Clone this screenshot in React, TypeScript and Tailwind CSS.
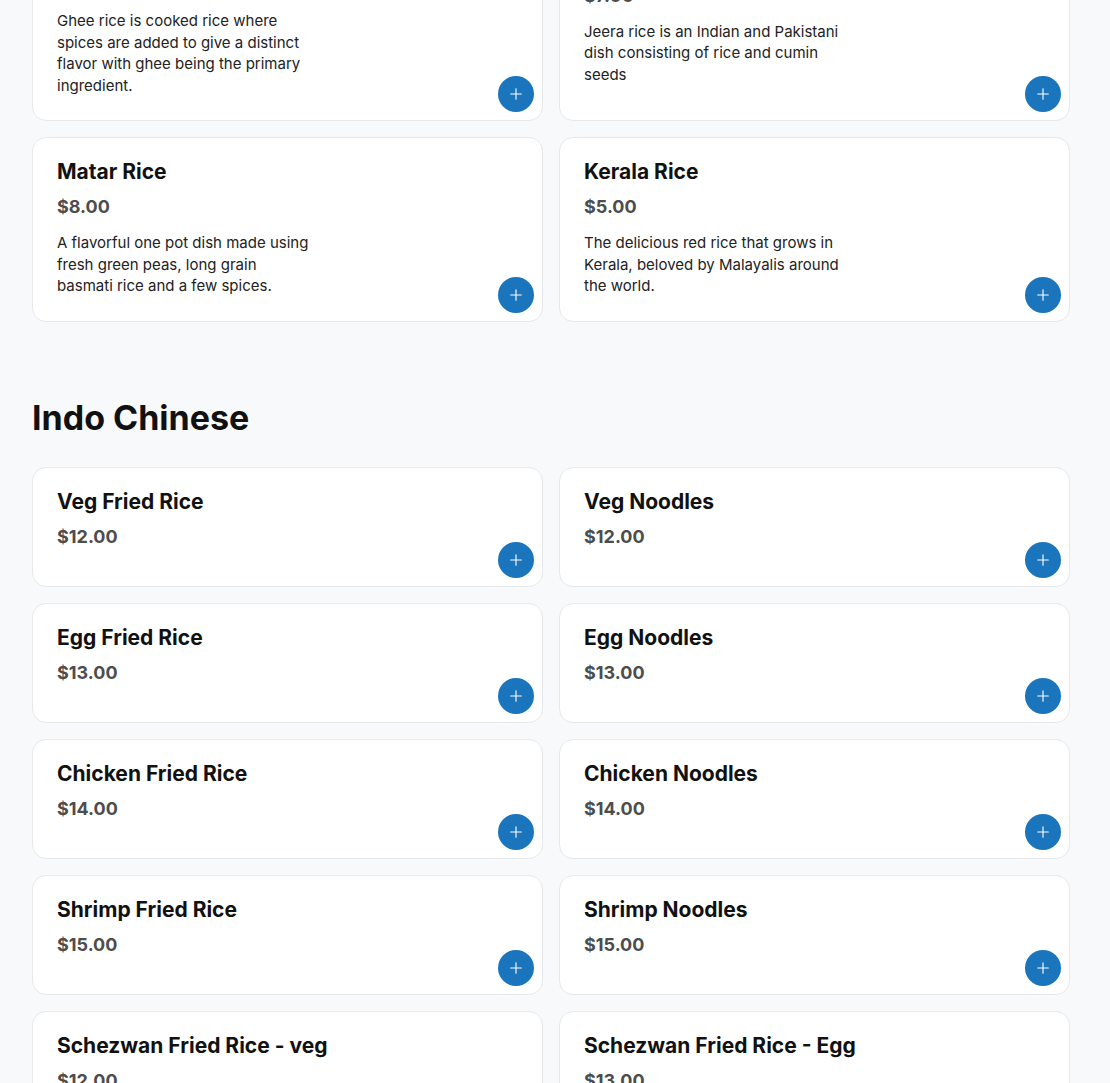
import { Plus } from 'lucide-react';

type Dish = { name: string; price: string; desc?: string };

const riceTop: Dish[] = [
  { name: 'Ghee Rice', price: '$7.00', desc: 'Ghee rice is cooked rice where spices are added to give a distinct flavor with ghee being the primary ingredient.' },
  { name: 'Jeera Rice', price: '$7.00', desc: 'Jeera rice is an Indian and Pakistani dish consisting of rice and cumin seeds' },
  { name: 'Matar Rice', price: '$8.00', desc: 'A flavorful one pot dish made using fresh green peas, long grain basmati rice and a few spices.' },
  { name: 'Kerala Rice', price: '$5.00', desc: 'The delicious red rice that grows in Kerala, beloved by Malayalis around the world.' },
];

const indoChinese: Dish[] = [
  { name: 'Veg Fried Rice', price: '$12.00' },
  { name: 'Veg Noodles', price: '$12.00' },
  { name: 'Egg Fried Rice', price: '$13.00' },
  { name: 'Egg Noodles', price: '$13.00' },
  { name: 'Chicken Fried Rice', price: '$14.00' },
  { name: 'Chicken Noodles', price: '$14.00' },
  { name: 'Shrimp Fried Rice', price: '$15.00' },
  { name: 'Shrimp Noodles', price: '$15.00' },
  { name: 'Schezwan Fried Rice - veg', price: '$12.00' },
  { name: 'Schezwan Fried Rice - Egg', price: '$13.00' },
];

function DishCard({ dish }: { dish: Dish }) {
  return (
    <div className="relative flex flex-col justify-center rounded-[14px] border border-[#e6e8ec] bg-white px-6 pt-5 pb-6">
      <h3 className="text-[21px] font-bold leading-7 text-[#111]">{dish.name}</h3>
      <p className="mt-[7px] mb-[11px] text-lg font-bold leading-7 text-[#4d4d4d]">{dish.price}</p>
      {dish.desc && (
        <p className="max-w-[256px] text-[15px] leading-[21.5px] text-[#222]">{dish.desc}</p>
      )}
      <button className="absolute right-2 bottom-2 flex h-9 w-9 items-center justify-center rounded-full bg-[#1b75bc] text-white">
        <Plus className="h-[18px] w-[18px]" strokeWidth={1.5} />
      </button>
    </div>
  );
}

export default function App() {
  return (
    <div className="h-[1083px] overflow-hidden bg-[#f8f9fb] font-['Inter',sans-serif]">
      <div className="-mt-[85px] pl-8 pr-10">
        <div className="grid grid-cols-2 gap-4">
          {riceTop.map((d) => (
            <DishCard key={d.name} dish={d} />
          ))}
        </div>

        <h2 className="mt-[76px] mb-[29px] text-[34px] font-bold leading-10 text-[#111]">Indo Chinese</h2>

        <div className="grid grid-cols-2 gap-4">
          {indoChinese.map((d) => (
            <DishCard key={d.name} dish={d} />
          ))}
        </div>
      </div>
    </div>
  );
}
